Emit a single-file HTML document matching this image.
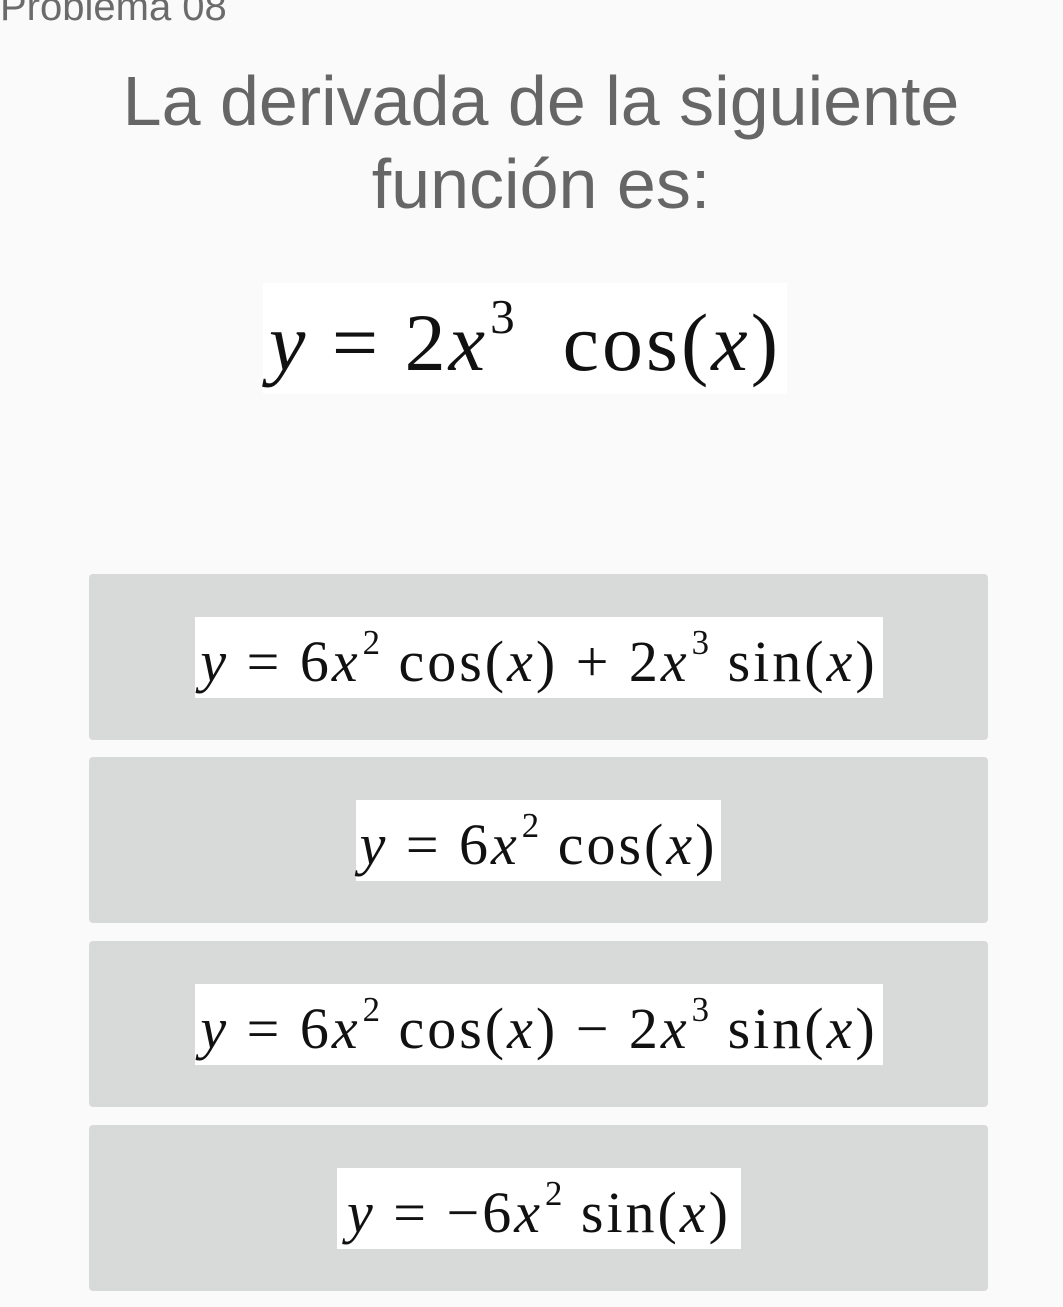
<!DOCTYPE html>
<html><head><meta charset="utf-8"><style>
body{margin:0;width:1063px;height:1307px;background:#fafafa;position:relative;overflow:hidden;font-family:"Liberation Sans",sans-serif}
.t{position:absolute;color:#6b6b6b;white-space:nowrap}
.card{position:absolute;left:89px;width:899px;height:166px;background:#d8d9d9;border-radius:4px}
.m{position:absolute;background:#fff;font-family:"Liberation Serif",serif;color:#111;white-space:nowrap;display:flex;align-items:center;justify-content:center;overflow:visible}
.m span.f{display:block;line-height:1;position:relative;top:4px}
.m i{font-style:italic}
.m sup{font-size:0.6em;vertical-align:0.75em;line-height:0;position:relative;left:2px}
</style></head><body>
<div class="t" style="left:0;top:-15px;font-size:40px">Problema 08</div>
<div class="t" style="left:0;width:1082px;text-align:center;top:60px;font-size:70px;line-height:83px;color:#666">La derivada de la siguiente<br>función es:</div>
<div class="m" style="left:263px;top:283px;width:524px;height:111px;font-size:82px;letter-spacing:3px"><span class="f"><i>y</i>&nbsp;=&nbsp;2<i>x</i><sup>3</sup>&nbsp;&nbsp;cos(<i>x</i>)</span></div>

<div class="card" style="top:574px"></div>
<div class="m" style="left:195px;top:617px;width:688px;height:81px;font-size:58px;letter-spacing:3px"><span class="f"><i>y</i>&nbsp;=&nbsp;6<i>x</i><sup>2</sup>&nbsp;cos(<i>x</i>)&nbsp;+&nbsp;2<i>x</i><sup>3</sup>&nbsp;sin(<i>x</i>)</span></div>

<div class="card" style="top:757px"></div>
<div class="m" style="left:356px;top:800px;width:365px;height:81px;font-size:58px;letter-spacing:3px"><span class="f"><i>y</i>&nbsp;=&nbsp;6<i>x</i><sup>2</sup>&nbsp;cos(<i>x</i>)</span></div>

<div class="card" style="top:941px"></div>
<div class="m" style="left:195px;top:984px;width:688px;height:81px;font-size:58px;letter-spacing:3px"><span class="f"><i>y</i>&nbsp;=&nbsp;6<i>x</i><sup>2</sup>&nbsp;cos(<i>x</i>)&nbsp;−&nbsp;2<i>x</i><sup>3</sup>&nbsp;sin(<i>x</i>)</span></div>

<div class="card" style="top:1125px"></div>
<div class="m" style="left:337px;top:1168px;width:404px;height:81px;font-size:58px;letter-spacing:3px"><span class="f"><i>y</i>&nbsp;=&nbsp;−6<i>x</i><sup>2</sup>&nbsp;sin(<i>x</i>)</span></div>
</body></html>
